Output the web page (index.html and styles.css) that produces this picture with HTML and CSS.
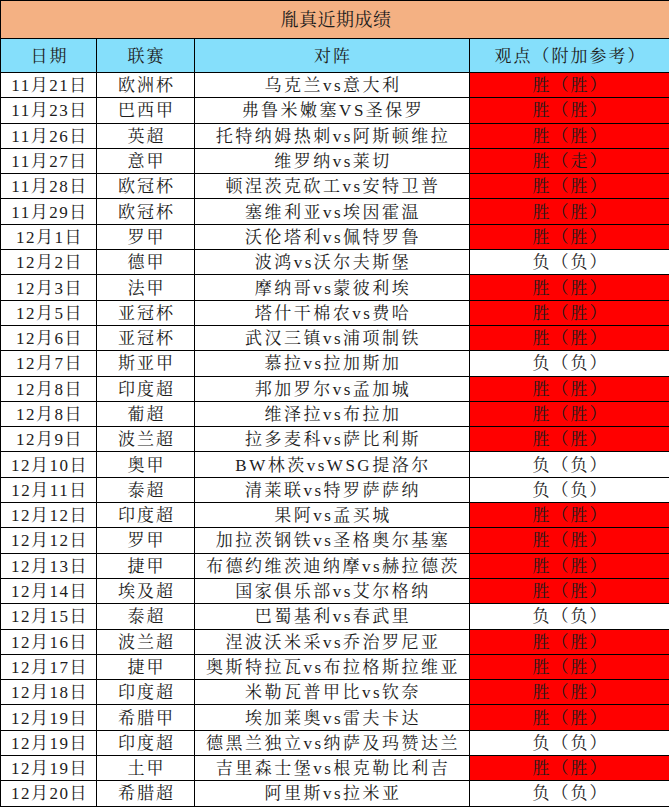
FILE: index.html
```html
<!DOCTYPE html>
<html lang="zh-CN">
<head>
<meta charset="utf-8">
<title>胤真近期成绩</title>
<link rel="stylesheet" href="styles.css">
</head>
<body>
<table class="results">
  <colgroup>
    <col class="c-date"><col class="c-league"><col class="c-match"><col class="c-view">
  </colgroup>
  <thead>
    <tr class="title-row"><th colspan="4">胤真近期成绩</th></tr>
    <tr class="head-row"><th>日期</th><th>联赛</th><th>对阵</th><th>观点（附加参考）</th></tr>
  </thead>
  <tbody>
    <tr><td>11月21日</td><td>欧洲杯</td><td>乌克兰vs意大利</td><td class="win">胜（胜）</td></tr>
    <tr><td>11月23日</td><td>巴西甲</td><td>弗鲁米嫩塞VS圣保罗</td><td class="win">胜（胜）</td></tr>
    <tr><td>11月26日</td><td>英超</td><td>托特纳姆热刺vs阿斯顿维拉</td><td class="win">胜（胜）</td></tr>
    <tr><td>11月27日</td><td>意甲</td><td>维罗纳vs莱切</td><td class="win">胜（走）</td></tr>
    <tr><td>11月28日</td><td>欧冠杯</td><td>顿涅茨克砍工vs安特卫普</td><td class="win">胜（胜）</td></tr>
    <tr><td>11月29日</td><td>欧冠杯</td><td>塞维利亚vs埃因霍温</td><td class="win">胜（胜）</td></tr>
    <tr><td>12月1日</td><td>罗甲</td><td>沃伦塔利vs佩特罗鲁</td><td class="win">胜（胜）</td></tr>
    <tr><td>12月2日</td><td>德甲</td><td>波鸿vs沃尔夫斯堡</td><td>负（负）</td></tr>
    <tr><td>12月3日</td><td>法甲</td><td>摩纳哥vs蒙彼利埃</td><td class="win">胜（胜）</td></tr>
    <tr><td>12月5日</td><td>亚冠杯</td><td>塔什干棉农vs费哈</td><td class="win">胜（胜）</td></tr>
    <tr><td>12月6日</td><td>亚冠杯</td><td>武汉三镇vs浦项制铁</td><td class="win">胜（胜）</td></tr>
    <tr><td>12月7日</td><td>斯亚甲</td><td>慕拉vs拉加斯加</td><td>负（负）</td></tr>
    <tr><td>12月8日</td><td>印度超</td><td>邦加罗尔vs孟加城</td><td class="win">胜（胜）</td></tr>
    <tr><td>12月8日</td><td>葡超</td><td>维泽拉vs布拉加</td><td class="win">胜（胜）</td></tr>
    <tr><td>12月9日</td><td>波兰超</td><td>拉多麦科vs萨比利斯</td><td class="win">胜（胜）</td></tr>
    <tr><td>12月10日</td><td>奥甲</td><td>BW林茨vsWSG提洛尔</td><td>负（负）</td></tr>
    <tr><td>12月11日</td><td>泰超</td><td>清莱联vs特罗萨萨纳</td><td>负（负）</td></tr>
    <tr><td>12月12日</td><td>印度超</td><td>果阿vs孟买城</td><td class="win">胜（胜）</td></tr>
    <tr><td>12月12日</td><td>罗甲</td><td>加拉茨钢铁vs圣格奥尔基塞</td><td class="win">胜（胜）</td></tr>
    <tr><td>12月13日</td><td>捷甲</td><td>布德约维茨迪纳摩vs赫拉德茨</td><td class="win">胜（胜）</td></tr>
    <tr><td>12月14日</td><td>埃及超</td><td>国家俱乐部vs艾尔格纳</td><td class="win">胜（胜）</td></tr>
    <tr><td>12月15日</td><td>泰超</td><td>巴蜀基利vs春武里</td><td>负（负）</td></tr>
    <tr><td>12月16日</td><td>波兰超</td><td>涅波沃米采vs乔治罗尼亚</td><td class="win">胜（胜）</td></tr>
    <tr><td>12月17日</td><td>捷甲</td><td>奥斯特拉瓦vs布拉格斯拉维亚</td><td class="win">胜（胜）</td></tr>
    <tr><td>12月18日</td><td>印度超</td><td>米勒瓦普甲比vs钦奈</td><td class="win">胜（胜）</td></tr>
    <tr><td>12月19日</td><td>希腊甲</td><td>埃加莱奥vs雷夫卡达</td><td class="win">胜（胜）</td></tr>
    <tr><td>12月19日</td><td>印度超</td><td>德黑兰独立vs纳萨及玛赞达兰</td><td>负（负）</td></tr>
    <tr><td>12月19日</td><td>土甲</td><td>吉里森士堡vs根克勒比利吉</td><td class="win">胜（胜）</td></tr>
    <tr><td>12月20日</td><td>希腊超</td><td>阿里斯vs拉米亚</td><td>负（负）</td></tr>
  </tbody>
</table>
</body>
</html>
```

FILE: styles.css
```css
html, body {
  margin: 0;
  padding: 0;
  background: #ffffff;
}

.results {
  width: 669px;
  border-collapse: collapse;
  table-layout: fixed;
  font-family: "Liberation Serif", "Noto Serif CJK SC", "Noto Sans CJK SC", serif;
  font-size: 17px;
  color: #1c1c1c;
}

.c-date { width: 96px; }
.c-league { width: 98px; }
.c-match { width: 275px; }
.c-view { width: 200px; }

.results th,
.results td {
  border: 1px solid #000;
  padding: 1px 0 0 2px;
  text-align: center;
  vertical-align: middle;
  font-weight: normal;
  white-space: nowrap;
  line-height: 1;
  letter-spacing: 2px;
}

.title-row th {
  background: #f4b183;
  height: 36px;
  font-size: 18px;
  letter-spacing: 0.5px;
}

.head-row th {
  background: #85dffb;
  height: 32px;
}

.results tbody td {
  height: 23.3px;
}

.results tbody td:first-child {
  letter-spacing: 1.5px;
}

.results tbody td:nth-child(3) {
  letter-spacing: 2.5px;
}

.results td.win {
  background: #ff0000;
}
```
